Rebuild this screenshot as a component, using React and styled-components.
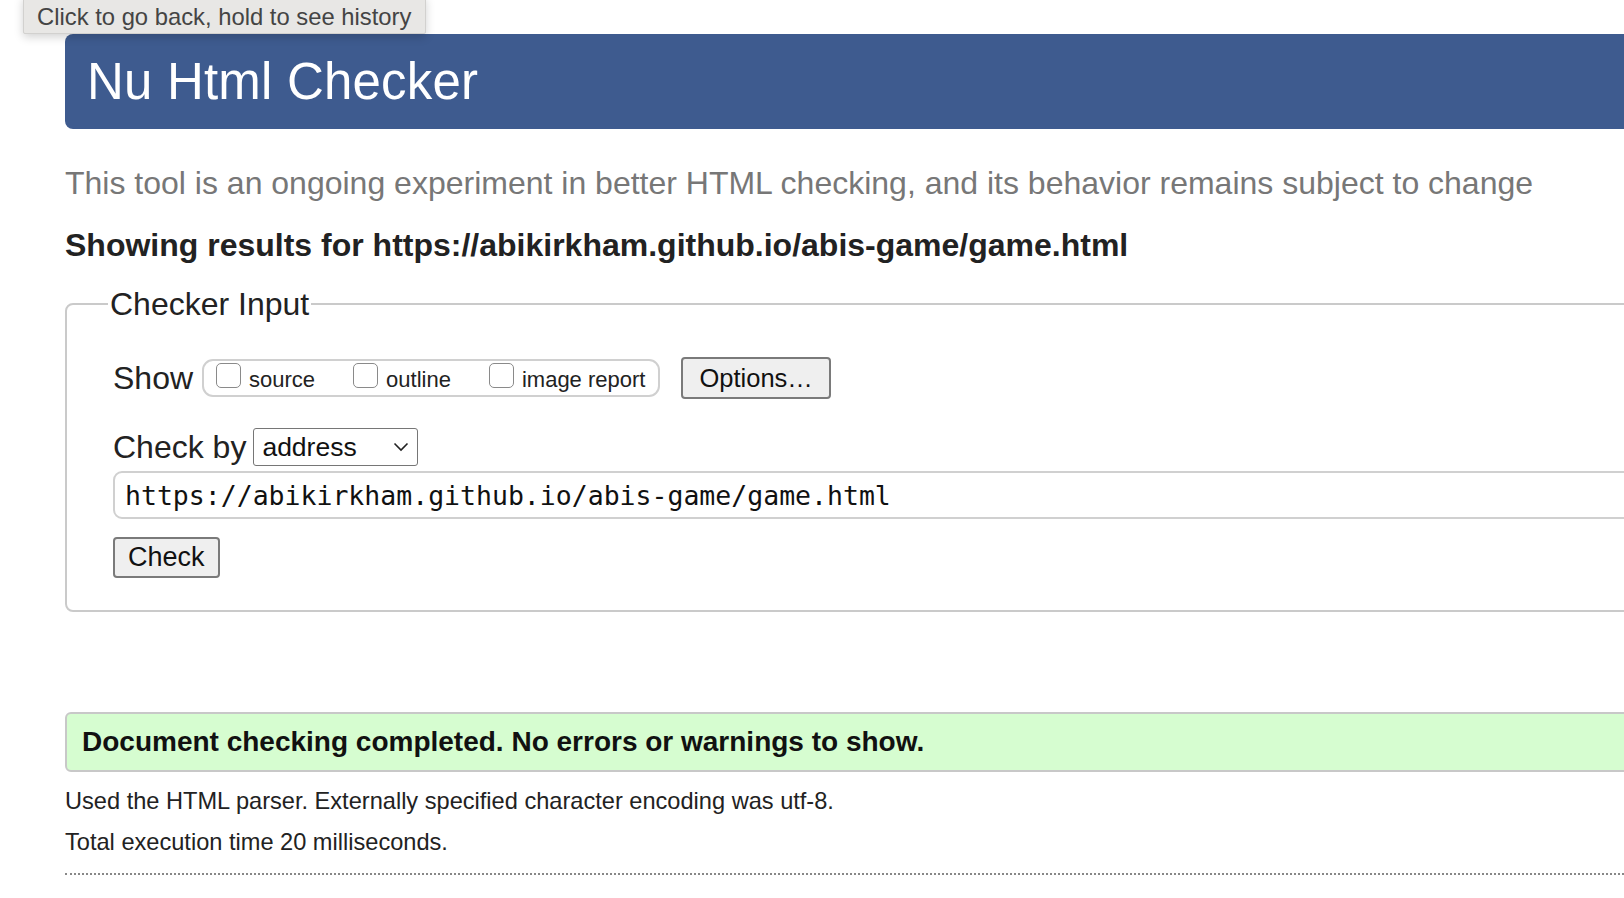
import { createGlobalStyle, styled } from 'styled-components';

const GlobalStyle = createGlobalStyle`
  html, body {
    margin: 0;
    padding: 0;
    background: #ffffff;
    overflow: hidden;
  }
  body {
    font-family: "Liberation Sans", Arial, Helvetica, sans-serif;
    font-size: 32px;
    color: #222;
  }
`;

function App() {
  return (
    <>
      <GlobalStyle />
      <Tooltip>Click to go back, hold to see history</Tooltip>
      <Page>
        <Header>
          <Title>Nu Html Checker</Title>
        </Header>
        <Subtitle>
          This tool is an ongoing experiment in better HTML checking, and its behavior remains subject to change
        </Subtitle>
        <ResultsFor>Showing results for https://abikirkham.github.io/abis-game/game.html</ResultsFor>

        <InputSet>
          <Legend>Checker Input</Legend>
          <Row>
            <RowLabel>Show</RowLabel>
            <Options>
              <Option><Box type="checkbox" />source</Option>
              <Option><Box type="checkbox" />outline</Option>
              <Option><Box type="checkbox" />image report</Option>
            </Options>
            <Button type="button" $wide>Options…</Button>
          </Row>
          <Row $top={29}>
            <RowLabel $tight>Check by</RowLabel>
            <SelectWrap>
              <Select defaultValue="address">
                <option value="address">address</option>
                <option value="file">file upload</option>
                <option value="text">text input</option>
              </Select>
              <Chevron viewBox="0 0 16 10" aria-hidden="true">
                <path d="M1.5 1.5 L8 8 L14.5 1.5" fill="none" stroke="#222" strokeWidth="1.6" />
              </Chevron>
            </SelectWrap>
          </Row>
          <UrlInput type="url" defaultValue="https://abikirkham.github.io/abis-game/game.html" />
          <Button type="button">Check</Button>
        </InputSet>

        <Success>Document checking completed. No errors or warnings to show.</Success>
        <Note>Used the HTML parser. Externally specified character encoding was utf-8.</Note>
        <Note $top={14}>Total execution time 20 milliseconds.</Note>
        <Dotted />
      </Page>
    </>
  );
}

const Tooltip = styled.div`
    position: absolute;
    top: -4px;
    left: 23px;
    z-index: 10;
    height: 38px;
    box-sizing: border-box;
    padding: 7px 14px 0 13px;
    background: #e8e7e5;
    border: 1px solid #d2d1cf;
    border-radius: 2px;
    box-shadow: 0 3px 10px rgba(0, 0, 0, 0.18);
    font-family: "Liberation Sans", Arial, sans-serif;
    font-size: 23.8px;
    line-height: 26px;
    color: #444;
    white-space: nowrap;
`;

const Page = styled.main`
    padding: 34px 0 0 65px;
    margin-right: -300px;
`;

const Header = styled.header`
    display: flex;
    align-items: center;
    height: 95px;
    padding-left: 22px;
    background-color: #3e5b8f;
    border-radius: 8px 0 0 8px;
`;

const Title = styled.h1`
    margin: 0;
    font-size: 51px;
    font-weight: 400;
    color: #ffffff;
    letter-spacing: 0.2px;
`;

const Subtitle = styled.p`
    margin: 35px 0 0;
    font-size: 32px;
    line-height: 38px;
    color: #777;
    white-space: nowrap;
`;

const ResultsFor = styled.h2`
    margin: 24px 0 0;
    font-size: 32px;
    line-height: 38px;
    font-weight: 700;
    color: #222;
    white-space: nowrap;
`;

const InputSet = styled.fieldset`
    margin: 21px 0 0;
    padding: 34px 0 32px 46px;
    border: 2px solid #cacaca;
    border-radius: 8px;
    min-width: 0;
`;

const Legend = styled.legend`
    margin-left: -5px;
    padding: 0 2px;
    font-size: 32px;
    line-height: 38px;
    color: #222;
`;

const Row = styled.div`
    display: flex;
    align-items: center;
    margin-top: ${({ $top }) => ($top ?? 0)}px;
`;

const RowLabel = styled.span`
    font-size: 32px;
    color: #222;
    margin-right: ${({ $tight }) => ($tight ? '7px' : '9px')};
`;

const Options = styled.div`
    display: flex;
    align-items: center;
    gap: 38px;
    height: 38px;
    box-sizing: border-box;
    padding: 0 13px 0 12px;
    border: 2px solid #d0d0d0;
    border-radius: 11px;
    margin-right: 21px;
`;

const Option = styled.label`
    display: flex;
    align-items: center;
    gap: 8px;
    font-size: 22px;
    color: #222;
    padding-top: 4px;
`;

const Box = styled.input`
    appearance: none;
    margin: -10px 0 0;
    width: 25px;
    height: 25px;
    border: 1.5px solid #8a8a8a;
    border-radius: 5px;
    background: #ffffff;
`;

const Button = styled.button`
    height: ${({ $wide }) => ($wide ? '42px' : '41px')};
    padding: 0 ${({ $wide }) => ($wide ? '16px' : '13px')};
    margin-top: ${({ $wide }) => ($wide ? '0' : '18px')};
    font-family: "Liberation Sans", Arial, sans-serif;
    font-size: ${({ $wide }) => ($wide ? '25.5px' : '27px')};
    color: #111;
    background: #efefef;
    border: 2px solid #7a7a7a;
    border-radius: 4px;
`;

const SelectWrap = styled.div`
    position: relative;
    display: inline-flex;
`;

const Select = styled.select`
    appearance: none;
    width: 165px;
    height: 38px;
    padding: 0 0 0 8px;
    font-family: "Liberation Sans", Arial, sans-serif;
    font-size: 26.5px;
    color: #111;
    background: #ffffff;
    border: 1.5px solid #767676;
    border-radius: 3px;
`;

const Chevron = styled.svg`
    position: absolute;
    right: 9px;
    top: 14px;
    width: 16px;
    height: 10px;
    pointer-events: none;
`;

const UrlInput = styled.input`
    display: block;
    box-sizing: border-box;
    width: 100%;
    height: 48px;
    margin-top: 5px;
    padding: 0 10px;
    font-family: "DejaVu Sans Mono", "Liberation Mono", monospace;
    font-size: 26.5px;
    color: #111;
    border: 2px solid #d0d0d0;
    border-radius: 9px 0 0 9px;
    outline: none;
`;

const Success = styled.div`
    margin-top: 100px;
    height: 60px;
    box-sizing: border-box;
    display: flex;
    align-items: center;
    padding-left: 15px;
    background: #d6fdd0;
    border: 2px solid #c8c8c8;
    border-radius: 6px 0 0 6px;
    font-size: 28px;
    font-weight: 700;
    color: #111;
`;

const Note = styled.p`
    margin: ${({ $top }) => ($top ?? 16)}px 0 0;
    font-size: 23.6px;
    line-height: 27px;
    color: #222;
`;

const Dotted = styled.hr`
    margin: 17px 0 0;
    border: 0;
    border-top: 2px dotted #888;
`;

export default App;
